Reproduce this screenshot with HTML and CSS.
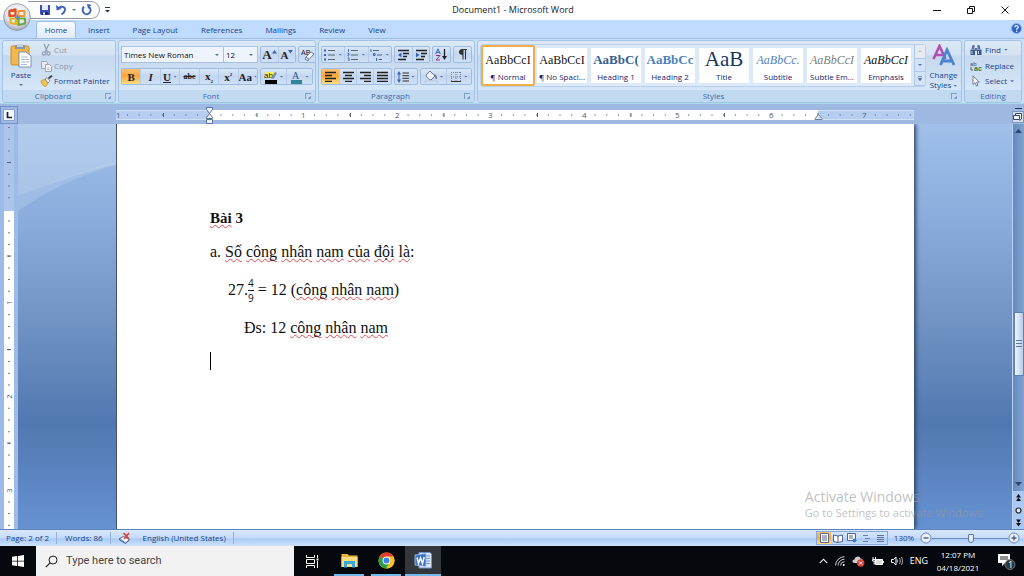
FILE: index.html
```html
<!DOCTYPE html>
<html lang="en">
<head>
  <meta charset="UTF-8">
  <meta name="viewport" content="width=device-width, initial-scale=1.0">
  <title>Document1 - Microsoft Word</title>
  <link rel="stylesheet" href="styles.css">
</head>
<body>
  <header class="titlebar">
    <button class="office-btn" aria-label="Office Button">
      <svg width="28" height="28" viewBox="0 0 28 28">
        <defs>
          <radialGradient id="orb" cx="50%" cy="35%" r="65%">
            <stop offset="0" stop-color="#fff"/>
            <stop offset=".65" stop-color="#dfe3e9"/>
            <stop offset="1" stop-color="#9fa9b8"/>
          </radialGradient>
        </defs>
        <circle cx="14" cy="14" r="13.4" fill="url(#orb)" stroke="#8a93a3" stroke-width=".8"/>
        <g fill="none" stroke-linejoin="round">
          <path d="M6.500 8l6-1.500v6l-6 .5z" stroke="#e0532a" stroke-width="2.400"/>
          <path d="M15.500 8h6v5h-6z" stroke="#f0953c" stroke-width="2"/>
          <path d="M7.500 15.500h5.500v5.500l-5.500-1z" stroke="#eab41c" stroke-width="2.200"/>
          <path d="M15.500 15.500h6.500v5l-6.500 1.500z" stroke="#6cab43" stroke-width="2.200"/>
          <path d="M12 14.200h5M14.300 12v5" stroke="#4c8fd2" stroke-width="1.500"/>
        </g>
      </svg>
    </button>
    <div class="quick-access">
      <button aria-label="Save"><svg width="12" height="12" viewBox="0 0 12 12"><path d="M1 1h10v10H2l-1-1z" fill="#3a4fb5"/><path d="M3 1h6v5H3z" fill="#e6ecfb"/><path d="M3 8h6v3H3z" fill="#1f2f80"/><path d="M4 8.500h2v2H4z" fill="#fff"/></svg></button>
      <button aria-label="Undo"><svg width="11" height="12" viewBox="0 0 11 12"><path d="M2 4.500C5 1.500 9.500 2.500 9 6c-.3 2.300-2 3.500-3.500 4.500" fill="none" stroke="#3f63bd" stroke-width="1.900"/><path d="M0 1l.6 5.500L5.500 5z" fill="#3f63bd"/></svg></button>
      <i class="arrow"></i>
      <button aria-label="Redo"><svg width="12" height="12" viewBox="0 0 12 12"><path d="M3 2.500C1 4.500 1.300 8 3.500 9.500c3 1.800 6.500-.5 6-4C9.300 4 8.500 3.300 7.500 3" fill="none" stroke="#3f63bd" stroke-width="1.900"/><path d="M6 0l4.500.8L7 5z" fill="#3f63bd"/></svg></button>
    </div>
    <button class="qat-more" aria-label="Customize Quick Access Toolbar"><svg width="5" height="6" viewBox="0 0 5 6"><path d="M0 .5h5" stroke="#26324f"/><path d="M0 3h5L2.500 5.500z" fill="#26324f"/></svg></button>
    <h1 class="window-title">Document1 - Microsoft Word</h1>
    <div class="window-buttons">
      <button aria-label="Minimize"><svg width="10" height="10" viewBox="0 0 10 10"><path d="M1 5.500h8" stroke="#111"/></svg></button>
      <button aria-label="Restore"><svg width="10" height="10" viewBox="0 0 10 10"><path d="M1.500 3.500h5v5h-5zM3.500 3V1.500h5v5H7" fill="none" stroke="#111"/></svg></button>
      <button aria-label="Close"><svg width="10" height="10" viewBox="0 0 10 10"><path d="M1.500 1.500l7 7M8.500 1.500l-7 7" stroke="#111"/></svg></button>
    </div>
  </header>

  <nav class="tabs">
    <button class="tab active">Home</button>
    <button class="tab">Insert</button>
    <button class="tab">Page Layout</button>
    <button class="tab">References</button>
    <button class="tab">Mailings</button>
    <button class="tab">Review</button>
    <button class="tab">View</button>
    <button class="help" aria-label="Help"><svg width="11" height="11" viewBox="0 0 11 11"><circle cx="5.500" cy="5.500" r="5" fill="#2f62c9" stroke="#8fb3ea"/><path d="M3.800 4.300c.1-2.200 3.600-2 3.400 0C7 5.300 5.600 5.300 5.600 6.700" fill="none" stroke="#fff" stroke-width="1.200"/><circle cx="5.600" cy="8.300" r=".7" fill="#fff"/></svg></button>
  </nav>

  <section class="ribbon">
    <div class="group clipboard">
      <div class="group-body">
        <button class="big-btn paste">
          <svg width="22" height="25" viewBox="0 0 22 25"><rect x="1" y="3" width="18" height="19" rx="1.500" fill="#f2b84b" stroke="#c98a2a"/><path d="M5 2h10v4H5z" fill="#8c96a8"/><path d="M7 1h6v3H7z" fill="#c9cfda"/><path d="M9 9h7l5 4v11H9z" fill="#fff" stroke="#7d93b8"/><path d="M11 14h7M11 16.500h8M11 19h8M11 21.500h6" stroke="#a9bbda"/></svg>
          <span>Paste</span>
          <i class="arrow"></i>
        </button>
        <div class="stack">
          <button class="line-btn disabled"><svg width="13" height="12" viewBox="0 0 13 12"><path d="M4 0l3.500 8M9 0L5 8" stroke="#8f9bb0" stroke-width="1.200"/><circle cx="4" cy="9.500" r="1.700" fill="none" stroke="#8f9bb0" stroke-width="1.200"/><circle cx="8.500" cy="9.500" r="1.700" fill="none" stroke="#8f9bb0" stroke-width="1.200"/></svg>Cut</button>
          <button class="line-btn disabled"><svg width="13" height="12" viewBox="0 0 13 12"><path d="M1.500 1.500h5l1 1v6h-6z" fill="#e8edf5" stroke="#9aa7bd"/><path d="M5.500 4.500h4l2 2v5h-6z" fill="#f3f6fa" stroke="#9aa7bd"/><path d="M7 8h3M7 9.500h3" stroke="#aab5c8" stroke-width=".7"/></svg>Copy</button>
          <button class="line-btn"><svg width="13" height="12" viewBox="0 0 13 12"><path d="M1 6l4-2 3 4-2 3.500c-2 0-4-1.500-5-5.500z" fill="#f0c64c" stroke="#b98a24" stroke-width=".7"/><path d="M5 4l2-1.500L10 6 8 8z" fill="#eef1f6" stroke="#6f7684" stroke-width=".7"/><path d="M8.500 3.500L12 .7" stroke="#3c4456" stroke-width="2"/></svg>Format Painter</button>
        </div>
      </div>
      <div class="group-label">Clipboard<i class="launcher"></i></div>
    </div>

    <div class="group font">
      <div class="group-body rows">
        <div class="row">
          <div class="combos">
            <div class="combo font-name"><select aria-label="Font"><option>Times New Roman</option></select></div>
            <div class="combo font-size"><select aria-label="Font size"><option>12</option></select></div>
          </div>
          <div class="btns">
            <button class="serif grow" aria-label="Grow Font"><b>A</b><svg width="5" height="4" viewBox="0 0 5 4"><path d="M2.500 0L5 3.500H0z" fill="#3e62a8"/></svg></button>
            <button class="serif shrink" aria-label="Shrink Font"><b>A</b><svg width="5" height="4" viewBox="0 0 5 4"><path d="M0 0h5L2.500 3.500z" fill="#3e62a8"/></svg></button>
          </div>
          <div class="btns">
            <button aria-label="Clear Formatting"><svg width="15" height="14" viewBox="0 0 15 14"><text x="1" y="7" font-size="7" font-family="Liberation Sans" fill="#222">AB</text><path d="M6 9l5-5 3 2-5 5.500z" fill="#f3f6fc" stroke="#6c7fa6"/><path d="M6 9l3 2.500-1 1.500-3-2z" fill="#dbe3f4" stroke="#6c7fa6"/></svg></button>
          </div>
        </div>
        <div class="row">
          <div class="btns format">
            <button class="serif pressed"><b>B</b></button>
            <button class="serif"><b><em>I</em></b></button>
            <button class="serif"><b><u>U</u></b><i class="arrow"></i></button>
            <button class="serif small"><b><s>abc</s></b></button>
            <button class="serif"><b>x<sub>2</sub></b></button>
            <button class="serif"><b>x<sup>2</sup></b></button>
            <button class="serif"><b>Aa</b><i class="arrow"></i></button>
          </div>
          <div class="btns colors">
            <button aria-label="Highlight"><svg width="14" height="14" viewBox="0 0 14 14"><path d="M1 2h8v6H1z" fill="#fbf04a"/><text x="0" y="8" font-size="8" font-family="Liberation Sans" fill="#222">ab</text><path d="M7 8l4-6 2 1-3.500 6z" fill="#7d8aa5"/><path d="M1 10h12v4H1z" fill="#000"/></svg><i class="arrow"></i></button>
            <button aria-label="Font Color"><svg width="13" height="14" viewBox="0 0 13 14"><text x="2" y="9" font-size="10" font-family="Liberation Serif" fill="#2c4f86">A</text><path d="M1 10h11v4H1z" fill="#31859b"/></svg><i class="arrow"></i></button>
          </div>
        </div>
      </div>
      <div class="group-label">Font<i class="launcher"></i></div>
    </div>

    <div class="group paragraph">
      <div class="group-body rows">
        <div class="row">
          <div class="btns lists">
            <button aria-label="Bullets"><svg width="12" height="12" viewBox="0 0 12 12"><path d="M0 1.500h2M0 6h2M0 10.500h2" stroke="#3a62b4" stroke-width="2"/><path d="M4 1.500h7M4 6h7M4 10.500h7" stroke="#5b6473"/></svg><i class="arrow"></i></button>
            <button aria-label="Numbering"><svg width="12" height="12" viewBox="0 0 12 12"><path d="M1.500 0v3M.5 4.500h1.500V6H1v1h1M.5 9h1.500v3H.5" stroke="#3a62b4" fill="none" stroke-width=".9"/><path d="M4 1.500h7M4 6h7M4 10.500h7" stroke="#5b6473"/></svg><i class="arrow"></i></button>
            <button aria-label="Multilevel List"><svg width="13" height="12" viewBox="0 0 13 12"><path d="M1 0v3M3.500 4.500h1.500v2H3.500zM6.500 9v3" stroke="#3a62b4" fill="none"/><path d="M3 1.500h6M7 6h5M8.500 10.500H12" stroke="#5b6473"/></svg><i class="arrow"></i></button>
          </div>
          <div class="btns">
            <button aria-label="Decrease Indent"><svg width="13" height="12" viewBox="0 0 13 12"><path d="M1 1.500h11M6 4.500h6M6 7.500h4M1 10.500h8" stroke="#222" stroke-width="1.300"/><path d="M4.500 3.500v5L1 6z" fill="#3a62b4"/></svg></button>
            <button aria-label="Increase Indent"><svg width="13" height="12" viewBox="0 0 13 12"><path d="M1 1.500h11M6 4.500h6M6 7.500h4M1 10.500h8" stroke="#222" stroke-width="1.300"/><path d="M1 3.500v5L4.500 6z" fill="#3a62b4"/></svg></button>
          </div>
          <div class="btns">
            <button aria-label="Sort"><svg width="13" height="13" viewBox="0 0 13 13"><path d="M.7 6L3 .8 5.300 6M1.500 4.300h3" fill="none" stroke="#3a62b4"/><path d="M1 7.500h4l-4 4.500h4" fill="none" stroke="#8c3b68"/><path d="M9.500 1v8" stroke="#222" stroke-width="1.300"/><path d="M7 8h5l-2.500 4z" fill="#222"/></svg></button>
          </div>
          <div class="btns">
            <button aria-label="Show paragraph marks"><svg width="9" height="11" viewBox="0 0 9 11"><path d="M4.500 0.500H9M5 0v10.500M7.500 0v10.500" stroke="#333" stroke-width="1.100"/><path d="M5 0C-.5-.2-.5 6.200 5 6z" fill="#333"/></svg></button>
          </div>
        </div>
        <div class="row">
          <div class="btns aligns">
            <button class="pressed" aria-label="Align Left"><svg width="11" height="11" viewBox="0 0 11 11"><path d="M0 1.500h11M0 4.500h7M0 7.500h11M0 10.500h7" stroke="#222" stroke-width="1.300"/></svg></button>
            <button aria-label="Center"><svg width="11" height="11" viewBox="0 0 11 11"><path d="M0 1.500h11M2 4.500h7M0 7.500h11M2 10.500h7" stroke="#222" stroke-width="1.300"/></svg></button>
            <button aria-label="Align Right"><svg width="11" height="11" viewBox="0 0 11 11"><path d="M0 1.500h11M4 4.500h7M0 7.500h11M4 10.500h7" stroke="#222" stroke-width="1.300"/></svg></button>
            <button aria-label="Justify"><svg width="11" height="11" viewBox="0 0 11 11"><path d="M0 1.500h11M0 4.500h11M0 7.500h11M0 10.500h11" stroke="#222" stroke-width="1.300"/></svg></button>
          </div>
          <div class="btns">
            <button aria-label="Line Spacing"><svg width="12" height="12" viewBox="0 0 12 12"><path d="M2 2v8" stroke="#3a62b4"/><path d="M0 3.500L2 0l2 3.500zM0 8.500L2 12l2-3.500z" fill="#3a62b4"/><path d="M5.500 2H12M5.500 4.700H12M5.500 7.300H12M5.500 10H12" stroke="#333"/></svg><i class="arrow"></i></button>
          </div>
          <div class="btns shade">
            <button aria-label="Shading"><svg width="14" height="13" viewBox="0 0 14 13"><path d="M2 5l4-4 5 5-4 4c-1.500 0-5-3-5-5z" fill="#eef2f9" stroke="#6a7691"/><path d="M10 5c2 0 2.500 2 2 4" fill="none" stroke="#6a7691" stroke-width="1.500"/><path d="M1 11h12v2H1z" fill="#dfe8f6" stroke="#93a8cb" stroke-width=".5"/></svg><i class="arrow"></i></button>
            <button aria-label="Borders"><svg width="12" height="12" viewBox="0 0 12 12"><path d="M1.500 1v10M6 1v10M10.500 1v10M1 1.500h10M1 6h10" stroke="#7083a8" stroke-dasharray="1 1"/><path d="M1 10.500h10" stroke="#333"/></svg><i class="arrow"></i></button>
          </div>
        </div>
      </div>
      <div class="group-label">Paragraph<i class="launcher"></i></div>
    </div>

    <div class="group styles">
      <div class="group-body">
        <div class="gallery">
          <button class="style-tile selected"><span class="sample">AaBbCcI</span><span class="name">¶ Normal</span></button>
          <button class="style-tile"><span class="sample">AaBbCcI</span><span class="name">¶ No Spaci...</span></button>
          <button class="style-tile"><span class="sample heading1">AaBbC(</span><span class="name">Heading 1</span></button>
          <button class="style-tile"><span class="sample heading2">AaBbCc</span><span class="name">Heading 2</span></button>
          <button class="style-tile"><span class="sample title">AaB</span><span class="name">Title</span></button>
          <button class="style-tile"><span class="sample subtitle">AaBbCc.</span><span class="name">Subtitle</span></button>
          <button class="style-tile"><span class="sample subtle">AaBbCcI</span><span class="name">Subtle Em...</span></button>
          <button class="style-tile"><span class="sample emphasis">AaBbCcI</span><span class="name">Emphasis</span></button>
          <div class="gallery-scroll">
            <button class="off" aria-label="Previous row"><i class="arrow up"></i></button>
            <button aria-label="Next row"><i class="arrow"></i></button>
            <button class="more" aria-label="More styles"><i class="arrow"></i></button>
          </div>
        </div>
        <button class="big-btn change">
          <svg width="24" height="23" viewBox="0 0 24 23"><path d="M1.500 15L7.500 2l6 13M3.500 11h7" fill="none" stroke="#b04fb4" stroke-width="2.600"/><path d="M8.500 21L15 6l7 15M11 17h9" fill="none" stroke="#4a83cf" stroke-width="2.800"/></svg>
          <span>Change</span>
          <span>Styles <i class="arrow"></i></span>
        </button>
      </div>
      <div class="group-label">Styles<i class="launcher"></i></div>
    </div>

    <div class="group editing">
      <div class="group-body">
        <div class="stack">
          <button class="line-btn"><svg width="12" height="12" viewBox="0 0 12 12"><path d="M2.500 1h2v4h-3zM7.500 1h2l1 4h-3zM5 4h2v3H5z" fill="#5874a8"/><path d="M.5 5.500H5V11H.5zM7 5.500h4.500V11H7z" fill="#3b568c"/><path d="M2 7v3M8.500 7v3" stroke="#c7d7f2"/></svg>Find <i class="arrow"></i></button>
          <button class="line-btn"><svg width="12" height="12" viewBox="0 0 12 12"><text x="0" y="6" font-size="6" font-family="Liberation Sans" fill="#44506c">ab</text><text x="4" y="11" font-size="7" font-weight="bold" font-family="Liberation Sans" fill="#2f7a3a">ac</text><path d="M1 7v3h2" fill="none" stroke="#3a62b4"/></svg>Replace</button>
          <button class="line-btn"><svg width="12" height="12" viewBox="0 0 12 12"><path d="M3 .8v8.700l2-1.800L6.500 11l1.500-.7-1.500-3.100h2.800z" fill="#fff" stroke="#5f6f8f" stroke-width=".9"/></svg>Select <i class="arrow"></i></button>
        </div>
      </div>
      <div class="group-label">Editing</div>
    </div>
  </section>

  <div class="ruler-row">
    <button class="tab-stop" aria-label="Left tab"><svg width="12" height="12" viewBox="0 0 12 12"><path d="M.5.500h11v11H.5z" fill="#f4f8ff" stroke="#8aa7d4"/><path d="M4.500 3v5.500H9" fill="none" stroke="#222" stroke-width="1.700"/></svg></button>
    <div class="ruler">
      <svg class="ruler-strip" width="798" height="20" viewBox="0 0 798 20">
        <path d="M0 6.500h798v9H0z" fill="#b5cdee" stroke="#cfe0f7" stroke-width="1"/>
        <path d="M94 6h608v10H94z" fill="#fff"/>
        <path d="M11 11h687" stroke="#6c7d9a" stroke-width="1.500" stroke-dasharray="1 10.690"/>
        <path d="M712 11h86" stroke="#6c7d9a" stroke-width="1.500" stroke-dasharray="1 10.690"/>
        <path d="M47 11h740" stroke="#56637c" stroke-width="4" stroke-dasharray="1 92.500"/>
        <path d="M0 11h5M744 11h8" stroke="#b5cdee" stroke-width="7"/>
        <path d="M184 11h500" stroke="#fff" stroke-width="7" stroke-dasharray="7 86.500"/>
        <g class="ruler-num">
          <text x="0" y="14">1</text><text x="185" y="14">1</text><text x="279" y="14">2</text><text x="372" y="14">3</text><text x="466" y="14">4</text><text x="559" y="14">5</text><text x="653" y="14">6</text><text x="746" y="14">7</text>
        </g>
        <path d="M90.500 3.500h6v2L93.500 9.500l-3-4zM93.500 9.500l3 4v1h-6v-1zM90.500 15.500h6v4h-6z" fill="#eaf1fb" stroke="#5f7396"/>
        <path d="M702.500 10.500l3.500 4v1h-7v-1z" fill="#dce6f4" stroke="#6e7f9c"/>
      </svg>
    </div>
    <div class="ruler-toggle">
      <i class="split"></i>
      <button aria-label="View Ruler"><svg width="10" height="10" viewBox="0 0 10 10"><path d="M.5 3.500h6v4h-6zM2.500 3V1.500h6V7L6.500 8.500" fill="#f2f6fc" stroke="#3b4660"/></svg></button>
    </div>
  </div>

  <main class="workspace">
    <div class="v-ruler">
      <svg width="10" height="405" viewBox="0 0 10 405">
        <path d="M0 0h10v87H0z" fill="#adc5ea"/>
        <path d="M0 87h10v318H0z" fill="#fff"/>
        <path d="M5 3v402" stroke="#6c7d9a" stroke-width="2" stroke-dasharray="1 10.700"/>
        <path d="M5 38v367" stroke="#56637c" stroke-width="4" stroke-dasharray="1 92.500"/>
        <path d="M5 83v8M5 175v9M5 269v9M5 363v9" stroke="#fff" stroke-width="7"/>
        <path d="M0 82h10v5H0z" fill="#adc5ea"/>
        <g class="ruler-num"><text transform="translate(8 181) rotate(-90)">1</text><text transform="translate(8 275) rotate(-90)">2</text><text transform="translate(8 369) rotate(-90)">3</text></g>
      </svg>
    </div>
    <div class="desk">
      <svg class="swoosh" width="400" height="90" viewBox="0 0 400 90">
        <path d="M0 0h400v0C250 5 120 25 0 72z" fill="#c6dbf2" opacity=".45"/>
        <path d="M0 72C30 60 60 48 98 37v4C60 52 30 66 0 87z" fill="#b9d0ee" opacity=".35"/>
      </svg>
      <article class="page" lang="vi">
        <p class="bold"><span class="typo">Bài</span> 3</p>
        <p>a. <span class="typo">Số</span> <span class="typo">công</span> <span class="typo">nhân</span> <span class="typo">nam</span> <span class="typo">của</span> <span class="typo">đội</span> <span class="typo">là</span>:</p>
        <p class="equation">27.<span class="frac"><span>4</span><span>9</span></span>&nbsp;= 12 (<span class="typo">công</span>&nbsp;<span class="typo">nhân</span>&nbsp;<span class="typo">nam</span>)</p>
        <p class="answer">Đs: 12 <span class="typo">công</span> <span class="typo">nhân</span> <span class="typo">nam</span></p>
        <p><span class="caret"></span></p>
      </article>
    </div>
    <div class="scrollbar">
      <div class="scroll-track">
        <i class="arrow up"></i>
        <div class="thumb"></div>
        <i class="arrow"></i>
      </div>
      <div class="browse">
        <svg width="7" height="8" viewBox="0 0 7 8"><path d="M3.500 0L6 3.500H1zM3.500 3.500L6 7H1z" fill="#111"/></svg>
        <svg width="7" height="7" viewBox="0 0 7 7"><circle cx="3.500" cy="3.500" r="2.500" fill="#dce6f5" stroke="#222" stroke-width="1.200"/></svg>
        <svg width="7" height="8" viewBox="0 0 7 8"><path d="M1 .5h5L3.500 4zM1 4h5L3.500 7.500z" fill="#111"/></svg>
      </div>
    </div>
    <div class="watermark">
      <div class="watermark-title">Activate Windows</div>
      <div>Go to Settings to activate Windows.</div>
    </div>
  </main>

  <footer class="statusbar">
    <span class="cell">Page: 2 of 2</span>
    <span class="cell">Words: 86</span>
    <svg class="proof" width="12" height="12" viewBox="0 0 12 12"><path d="M.5 6.500l4-2 6 3-4 3.500z" fill="#fff" stroke="#4e69a8"/><path d="M.5 6.500v1.500l6 3.500 4-3.500" fill="none" stroke="#4e69a8"/><path d="M4.500 1l5.500 6M10 1L5 7" stroke="#e0412b" stroke-width="1.700"/></svg>
    <span class="cell lang">English (United States)</span>
    <div class="views">
      <button class="pressed" aria-label="Print Layout"><svg width="9" height="10" viewBox="0 0 9 10"><path d="M.5.500h8v9h-8zM2 3h5M2 5h5M2 7h5" fill="#fff" stroke="#5b6784"/></svg></button>
      <button aria-label="Full Screen Reading"><svg width="10" height="9" viewBox="0 0 10 9"><path d="M.5 1l4.500 1 4.500-1v6.500L5 8.500l-4.500-1zM5 2v6" fill="#fff" stroke="#4c6294"/></svg></button>
      <button aria-label="Web Layout"><svg width="10" height="10" viewBox="0 0 10 10"><path d="M.5.500h8v7h-8zM2 3h4M2 5h4" fill="#fff" stroke="#4c6294"/><circle cx="7.500" cy="7.500" r="2" fill="#3f7fb8"/></svg></button>
      <button aria-label="Outline"><svg width="9" height="9" viewBox="0 0 9 9"><path d="M1 1.500h5M3 4.500h5M1 7.500h5" stroke="#6d7f9f"/></svg></button>
      <button aria-label="Draft"><svg width="9" height="9" viewBox="0 0 9 9"><path d="M1 1.500h7M1 3.500h7M1 5.500h7M1 7.500h7" stroke="#5d6f91"/></svg></button>
    </div>
    <button class="zoom-value">130%</button>
    <button class="round" aria-label="Zoom Out"><svg width="12" height="12" viewBox="0 0 12 12"><circle cx="6" cy="6" r="5" fill="#e9f1fc" stroke="#6a86b8"/><path d="M3.500 6h5" stroke="#4c5f85" stroke-width="1.400"/></svg></button>
    <input class="zoom-slider" type="range" min="0" max="100" value="52" aria-label="Zoom">
    <button class="round" aria-label="Zoom In"><svg width="12" height="12" viewBox="0 0 12 12"><circle cx="6" cy="6" r="5" fill="#e9f1fc" stroke="#6a86b8"/><path d="M3.500 6h5M6 3.500v5" stroke="#4c5f85" stroke-width="1.400"/></svg></button>
  </footer>

  <div class="taskbar">
    <button class="start" aria-label="Start"><svg width="12" height="12" viewBox="0 0 12 12"><path d="M0 1.700L5.200 1v4.700H0zM6 .9L12 0v5.700H6zM0 6.400h5.200V11L0 10.300zM6 6.400h6V12l-6-.9z" fill="#fff"/></svg></button>
    <label class="search">
      <svg width="13" height="13" viewBox="0 0 13 13"><circle cx="8" cy="5" r="4" fill="none" stroke="#222"/><path d="M5 8L.8 12.200" stroke="#222" stroke-width="1.100"/></svg>
      <input type="text" placeholder="Type here to search" aria-label="Search">
    </label>
    <button class="task" aria-label="Task View"><svg width="13" height="13" viewBox="0 0 13 13"><path d="M.5 0v2.500h8V0M.5 4.500h8v4h-8zM.5 13v-2.500h8V13M11.500 0v3M11.500 6v7" fill="none" stroke="#fff"/><path d="M10.500 3.500h2v2h-2z" fill="#fff"/></svg></button>
    <button class="task running" aria-label="File Explorer"><svg width="17" height="15" viewBox="0 0 17 15"><path d="M.5 1h6l1.500 1.500h8.500V14H.5z" fill="#e8b343"/><path d="M.5 4h16v10H.5z" fill="#fbdc7c"/><path d="M3 8h11v6.500h-3V11H6v3.500H3z" fill="#3aa5dc"/></svg></button>
    <button class="task running" aria-label="Chrome"><svg width="17" height="17" viewBox="0 0 17 17"><circle cx="8.500" cy="8.500" r="8" fill="#fbc116"/><path d="M8.500 8.500L1.600 4.500A8 8 0 0 1 15.400 4.500z" fill="#e33b2e"/><path d="M8.500 8.500L1.600 4.500A8 8 0 0 0 8 16.500L12 10z" fill="#27a04b"/><path d="M15.400 4.500H8.500V8.500l3.500 2-3.500 6A8 8 0 0 0 15.400 4.500z" fill="#fbc116"/><circle cx="8.500" cy="8.500" r="3.900" fill="#fff"/><circle cx="8.500" cy="8.500" r="3" fill="#3f80ea"/></svg></button>
    <button class="task running current" aria-label="Word"><svg width="18" height="17" viewBox="0 0 18 17"><path d="M5 .5h11l1.500 1.500v14H5z" fill="#dce8f8" stroke="#6d93cd"/><path d="M12 4h4M12 6.500h4M12 9h4M12 11.500h4" stroke="#6d93cd"/><path d="M1 3l11-1.500v13L1 13z" fill="#3b6fc0" stroke="#a9c6ee" stroke-width=".8"/><path d="M3 5.500l1.500 6L6.500 6l2 5.500 1.700-6.500" fill="none" stroke="#fff" stroke-width="1.500"/></svg></button>
    <div class="tray">
      <svg width="9" height="6" viewBox="0 0 9 6"><path d="M.7 5.200L4.500 1.200l3.800 4" fill="none" stroke="#fff" stroke-width="1.100"/></svg>
      <svg width="10" height="10" viewBox="0 0 10 10"><path d="M.5 9.500A9 9 0 0 1 9.500.7M3 9.500a6.500 6.500 0 0 1 6.500-6.300M5.500 9.500a4 4 0 0 1 4-3.800" fill="none" stroke="#ccc"/><circle cx="8.700" cy="9" r="1" fill="#fff"/></svg>
      <svg width="13" height="11" viewBox="0 0 13 11"><path d="M2.500 7C-.5 7 0 3.500 2.500 3.500 3.500-.5 8 0 8.500 2.500c3 0 3.500 4.500 0 4.500z" fill="#cfcfcf"/><circle cx="8.700" cy="7" r="3.700" fill="#d6403c"/><path d="M7.200 5.500l3 3M10.200 5.500l-3 3" stroke="#fff"/></svg>
      <svg width="12" height="10" viewBox="0 0 12 10"><path d="M3.500 3.500h7v5h-7z" fill="#ddd" stroke="#fff"/><path d="M11.500 5v2M1 1v2M3.500 1v2M.5 3.500H4v1.500H.5zM2.200 5v3.500" fill="none" stroke="#fff"/></svg>
      <svg width="12" height="10" viewBox="0 0 12 10"><path d="M.5 3.500h2l2.500-2.500v8L2.500 6.500h-2z" fill="none" stroke="#fff"/><path d="M6.500 3.500v3M8.500 2c1 2 1 4 0 6M10.500 1c1.300 3 1.300 5 0 8" fill="none" stroke="#bbb" stroke-width=".9"/></svg>
      <span>ENG</span>
    </div>
    <div class="clock"><span>12:07 PM</span><span>04/18/2021</span></div>
    <button class="notif" aria-label="Notifications"><svg width="19" height="19" viewBox="0 0 19 19"><path d="M1 2h12v9H8l-3 3v-3H1z" fill="#fff"/><path d="M3 5h8M3 7h8" stroke="#222"/><circle cx="13" cy="12.500" r="5" fill="#33383d" stroke="#8b8f93" stroke-width=".7"/><text x="11" y="16" font-size="9" font-family="Open Sans" fill="#fff">1</text></svg></button>
  </div>
</body>
</html>
```
FILE: styles.css
```css
* {
  box-sizing: border-box;
}
body {
  margin: 0;
  height: 100vh;
  display: flex;
  flex-direction: column;
  overflow: hidden;
  font-family: "Open Sans", "Noto Sans", sans-serif;
  font-size: 8px;
  line-height: 12px;
  color: #15428b;
  background: #bfdbff;
}
button {
  margin: 0;
  padding: 0;
  border: none;
  background: none;
  font: inherit;
  color: inherit;
  display: flex;
  align-items: center;
  justify-content: center;
  white-space: nowrap;
}
svg {
  display: block;
  flex: none;
}
.arrow {
  display: inline-block;
  width: 4px;
  height: 2px;
  background: #5573a8;
  clip-path: polygon(0 0, 100% 0, 50% 100%);
  vertical-align: middle;
}
.arrow.up {
  clip-path: polygon(50% 0, 100% 100%, 0 100%);
}

/* ====== Title bar ====== */
.titlebar {
  position: relative;
  display: flex;
  align-items: center;
  height: 20px;
  padding-left: 28px;
  background: #fff;
}
.office-btn {
  position: absolute;
  left: 3px;
  top: 3px;
  z-index: 5;
}
.quick-access {
  display: flex;
  align-items: center;
  gap: 5px;
  width: 72px;
  height: 18px;
  padding-left: 11px;
  border: 1px solid #8e98a8;
  border-left: none;
  border-radius: 0 9px 9px 0;
}
.qat-more {
  margin-left: 5px;
}
.window-title {
  flex: 1;
  margin: 0;
  padding-right: 16px;
  text-align: center;
  font-size: 9px;
  font-weight: 400;
  color: #222;
}
.window-buttons {
  display: flex;
  gap: 24px;
  padding-right: 14px;
}

/* ====== Tabs ====== */
.tabs {
  display: flex;
  align-items: flex-end;
  gap: 1px;
  height: 18px;
  padding: 0 2px 0 36px;
  background: #bfdbff;
}
.tab {
  height: 17px;
  padding: 0 11px;
}
.tab.active {
  width: 40px;
  padding: 0;
  background: linear-gradient(#f7fbff, #dfeafa);
  border: 1px solid #9dbce6;
  border-bottom: none;
  border-radius: 3px 3px 0 0;
}
.help {
  margin: 0 0 4px auto;
}

/* ====== Ribbon ====== */
.ribbon {
  display: flex;
  gap: 2px;
  height: 66px;
  padding: 1px 2px 0 2px;
  background: #c9dff8;
  border-top: 1px solid #9cbbe5;
  border-bottom: 1px solid #a8dbe8;
}
.group {
  display: flex;
  flex-direction: column;
  border: 1px solid #a3c3e6;
  border-radius: 3px;
  overflow: hidden;
  background: linear-gradient(#dce8f5 0, #d3e1f1 14px, #c6d8ed 15px, #d6e7fa 50px);
}
.clipboard {
  width: 114px;
}
.font {
  width: 198px;
}
.paragraph {
  width: 157px;
}
.styles {
  flex: 1;
  min-width: 0;
}
.editing {
  width: 58px;
}
.group-body {
  flex: 1;
  display: flex;
  min-height: 0;
}
.group-label {
  position: relative;
  display: flex;
  align-items: center;
  justify-content: center;
  height: 12px;
  padding-right: 12px;
  background: #c1d9f1;
  color: #3e6aaa;
}
.editing .group-label {
  padding: 0;
}
.launcher {
  position: absolute;
  right: 4px;
  top: 3px;
  width: 6px;
  height: 6px;
  border-left: 1px solid #7f9dca;
  border-top: 1px solid #7f9dca;
  background: linear-gradient(135deg, transparent 65%, #7f9dca 65%);
}
.big-btn {
  flex-direction: column;
  justify-content: flex-start;
  line-height: 10px;
}
.paste {
  width: 36px;
  padding-top: 2px;
  gap: 2px;
}
.paste .arrow {
  margin-top: 2px;
}
.change {
  flex: 1;
}
.change svg {
  margin-bottom: 3px;
}
.stack {
  display: flex;
  flex-direction: column;
  justify-content: space-evenly;
  align-items: flex-start;
}
.line-btn {
  gap: 3px;
  height: 14px;
}
.clipboard .line-btn {
  padding-left: 1px;
  gap: 1px;
}
.editing .stack {
  padding-left: 5px;
}
.disabled {
  color: #8d98aa;
}

/* rows of small buttons */
.rows {
  flex-direction: column;
  justify-content: center;
  gap: 5px;
  padding: 0 2px;
}
.row {
  display: flex;
  gap: 2px;
}
.btns {
  display: flex;
  height: 17px;
  border: 1px solid #9ebbe0;
  border-radius: 2px;
  background: linear-gradient(#d9e7f8, #c3d7f0 50%, #cfe0f6);
}
.btns button {
  flex: 1;
  min-width: 17px;
  gap: 2px;
}
.btns button + button {
  border-left: 1px solid #b4cbea;
}
.btns .pressed,
.views .pressed {
  background: linear-gradient(#fcc276, #f9a63c 45%, #fddf83);
}
.combos {
  display: flex;
  height: 17px;
}
.combo {
  position: relative;
  border: 1px solid #a7c1e3;
  background: #eef4fc;
}
.combo::after {
  content: "";
  position: absolute;
  right: 4px;
  top: 7px;
  width: 4px;
  height: 2px;
  background: #5573a8;
  clip-path: polygon(0 0, 100% 0, 50% 100%);
}
.combo select {
  appearance: none;
  width: 100%;
  height: 15px;
  padding: 0 2px;
  border: none;
  background: none;
  font: inherit;
  color: #111;
}
.font-name {
  width: 103px;
}
.font-size {
  width: 34px;
  border-left: none;
}
.serif {
  font-family: "Liberation Serif", serif;
  color: #222;
}
.btns .serif {
  font-family: "Liberation Serif", serif;
  font-size: 11px;
}
.serif sub,
.serif sup {
  font-size: 5px;
  line-height: 1px;
}
.btns .small {
  font-size: 8px;
}
.btns .grow {
  font-size: 13px;
}
.btns .grow,
.btns .shrink {
  gap: 0;
}
.grow svg,
.shrink svg {
  align-self: flex-start;
  margin-top: 3px;
}
.format {
  width: 137px;
}
.colors {
  flex: 1;
}
.font .row,
.paragraph .row {
  width: 100%;
}
.lists {
  flex: 1;
}
.aligns {
  width: 71px;
}
.shade {
  width: 52px;
}
.aligns + .btns {
  width: 25px;
}

/* ====== Style gallery ====== */
.styles .group-body {
  padding: 3px 0 3px 2px;
}
.gallery {
  display: flex;
  flex: none;
  width: 446px;
  border: 1px solid #b9d0ed;
  border-radius: 3px;
  background: #dce9f8;
}
.style-tile {
  flex: 1;
  min-width: 0;
  flex-direction: column;
  justify-content: flex-end;
  margin: 3px 2px;
  overflow: hidden;
  background: #fff;
}
.style-tile.selected {
  margin: 0;
  padding: 1px 0;
  border: 2px solid #f0ae4b;
  border-radius: 2px;
}
.sample {
  display: flex;
  align-items: center;
  flex: 1;
  font-family: "Liberation Serif", serif;
  font-size: 12px;
  color: #111;
}
.name {
  line-height: 12px;
  color: #1b1a6b;
}
.heading1 {
  font-size: 13px;
  font-weight: 700;
  color: #365f91;
}
.heading2 {
  font-size: 13px;
  font-weight: 700;
  color: #4f81bd;
}
.title {
  font-size: 21px;
  line-height: 24px;
  color: #17365d;
}
.subtitle {
  font-style: italic;
  color: #4f81bd;
}
.subtle {
  font-style: italic;
  color: #808080;
}
.emphasis {
  font-style: italic;
}
.gallery-scroll {
  display: flex;
  flex-direction: column;
  width: 11px;
  margin-left: 1px;
  border-left: 1px solid #b0c8e8;
}
.gallery-scroll button {
  flex: 1;
  background: #d3e3f7;
  border-bottom: 1px solid #b0c8e8;
}
.gallery-scroll .off {
  background: #e6e9ee;
}
.gallery-scroll .off .arrow {
  background: #b0b6c0;
}
.gallery-scroll .more .arrow {
  height: 5px;
  background: linear-gradient(#5573a8 1px, transparent 1px, transparent 2px, #5573a8 2px);
  clip-path: polygon(0 0, 100% 0, 100% 45%, 50% 100%, 0 45%);
}

/* ====== Horizontal ruler ====== */
.ruler-row {
  display: flex;
  height: 20px;
  background: #9db9e2;
}
.tab-stop {
  width: 18px;
  height: 18px;
  margin-top: 2px;
  border: 1px solid #6f92cb;
}
.ruler {
  flex: 1;
  display: flex;
  justify-content: center;
  overflow: hidden;
}
.ruler-num {
  font-size: 8px;
  fill: #4b5a75;
}
.ruler-toggle {
  display: flex;
  flex-direction: column;
  align-items: center;
  gap: 2px;
  width: 12px;
  padding-top: 4px;
}
.ruler-toggle .split {
  width: 7px;
  height: 1px;
  background: #223355;
}
.ruler-toggle button {
  width: 12px;
  height: 12px;
  background: #d5dfee;
  border: 1px solid #8098bf;
}

/* ====== Document area ====== */
.workspace {
  position: relative;
  flex: 1;
  display: flex;
  min-height: 0;
}
.v-ruler {
  width: 18px;
  padding-left: 4px;
  overflow: hidden;
  background: #9dbbe8;
}
.desk {
  position: relative;
  flex: 1;
  display: flex;
  justify-content: center;
  background: linear-gradient(#a0c0ea 0, #8caddd 22%, #7496c6 46%, #5078b0 74%, #6792d2 100%);
}
.swoosh {
  position: absolute;
  left: 0;
  top: 0;
}
.page {
  position: relative;
  width: 100%;
  max-width: 798px;
  padding: 84px 93px 0;
  background: #fff;
  border-left: 1px solid #42526e;
  box-shadow: 2px 0 4px #2f4668;
  clip-path: inset(0 -8px 0 0);
  font-family: "Liberation Serif", "Times New Roman", serif;
  font-size: 16px;
  line-height: 20px;
  color: #111;
}
.page p {
  margin: 0 0 14px;
}
.page .bold {
  font-size: 15px;
  font-weight: 700;
}
.typo {
  text-decoration: underline wavy #e8474a 1px;
  text-decoration-skip-ink: none;
  text-underline-offset: 1px;
}
.page .equation {
  display: flex;
  align-items: center;
  height: 28px;
  padding-left: 18px;
}
.frac {
  display: flex;
  flex-direction: column;
  font-family: "Open Sans", sans-serif;
  font-size: 10px;
  line-height: 14px;
}
.frac span + span {
  border-top: 1px solid #222;
}
.page .answer {
  padding-left: 34px;
}
.caret {
  display: block;
  width: 1px;
  height: 18px;
  background: #000;
}

.scrollbar {
  display: flex;
  flex-direction: column;
  width: 12px;
  border-left: 1px solid #b9d4f8;
  background: #a9c8f3;
}
.scroll-track {
  flex: 1;
  display: flex;
  flex-direction: column;
  align-items: center;
  padding: 5px 0;
  background: linear-gradient(90deg, #6489bd, #82a3d0);
}
.scroll-track .arrow {
  width: 7px;
  height: 4px;
  background: #2d4775;
}
.thumb {
  width: 10px;
  height: 18%;
  margin: auto 0 106px;
  border: 1px solid #6380ad;
  background:
    repeating-linear-gradient(#5e789f 0 1px, transparent 1px 3px) center / 6px 7px no-repeat,
    linear-gradient(90deg, #f0f6fd, #b7cde9);
}
.browse {
  display: flex;
  flex-direction: column;
  align-items: center;
  gap: 5px;
  padding: 3px 0 2px;
}
.watermark {
  position: absolute;
  left: 78.6%;
  bottom: 8px;
  font-size: 11px;
  line-height: 16px;
  color: rgba(150, 152, 155, 0.62);
  white-space: nowrap;
}
.watermark-title {
  font-size: 14px;
  line-height: 17px;
}

/* ====== Status bar ====== */
.statusbar {
  display: flex;
  align-items: center;
  height: 17px;
  padding: 0 4px 0 6px;
  border-top: 1px solid #5f83bb;
  background: linear-gradient(#d9e8fb 0, #c4dbf9 50%, #a9cbf6 55%, #cfe2fb 100%);
}
.cell {
  padding-right: 7px;
  margin-right: 8px;
  border-right: 1px solid #8fb1e0;
}
.lang {
  margin-left: 12px;
}
.views {
  display: flex;
  height: 14px;
  margin-left: auto;
  border: 1px solid #87a8d8;
}
.views button {
  width: 14px;
}
.zoom-value {
  width: 32px;
}
.round {
  width: 12px;
}
.zoom-slider {
  appearance: none;
  width: 76px;
  height: 12px;
  margin: 0;
  background: linear-gradient(#6f8bb9, #6f8bb9) center / 100% 1px no-repeat;
}
.zoom-slider::-webkit-slider-thumb {
  appearance: none;
  width: 6px;
  height: 9px;
  border: 1px solid #5c76a6;
  border-radius: 1px 1px 3px 3px;
  background: #e3edfa;
}

/* ====== Taskbar ====== */
.taskbar {
  display: flex;
  height: 30px;
  background: #05080d;
  color: #fff;
}
.start {
  width: 36px;
}
.search {
  display: flex;
  align-items: center;
  gap: 8px;
  width: 258px;
  padding-left: 9px;
  background: #f2f2f2;
}
.search input {
  flex: 1;
  min-width: 0;
  padding: 0;
  border: none;
  background: none;
  font: 11px/16px Roboto, sans-serif;
}
.search input::placeholder {
  color: #444;
}
.task {
  width: 36px;
  margin-right: 1px;
}
.running {
  border-bottom: 2px solid transparent;
  background: linear-gradient(#76b9ed, #76b9ed) center bottom / 30px 2px no-repeat border-box;
}
.task.current {
  background: linear-gradient(#76b9ed, #76b9ed) center bottom / 36px 2px no-repeat border-box, #33373c;
}
.tray {
  display: flex;
  align-items: center;
  gap: 7px;
  margin-left: auto;
  font-size: 9px;
}
.clock {
  display: flex;
  flex-direction: column;
  justify-content: center;
  align-items: center;
  width: 60px;
  line-height: 13px;
}
.notif {
  width: 36px;
}
```
